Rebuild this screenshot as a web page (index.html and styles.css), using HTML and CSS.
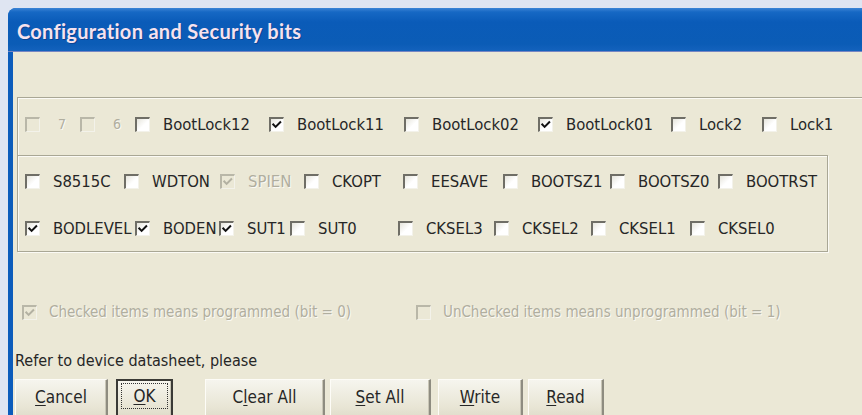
FILE: index.html
```html
<!DOCTYPE html>
<html lang="en">
<head>
<meta charset="utf-8">
<title>Configuration and Security bits</title>
<link rel="stylesheet" href="styles.css">
</head>
<body>
<div class="window">
  <div class="titlebar"><span class="title">Configuration and Security bits</span></div>
  <div class="client">
    <div class="group g1">
      <div class="row r1">
        <label class="cb dis digit"><span class="box"></span><span class="lbl">7</span></label>
        <label class="cb dis digit"><span class="box"></span><span class="lbl">6</span></label>
        <label class="cb"><span class="box"></span><span class="lbl">BootLock12</span></label>
        <label class="cb"><span class="box"><svg viewBox="0 0 13 13"><polyline points="2.5,6 5,8.5 10,3.5"/></svg></span><span class="lbl">BootLock11</span></label>
        <label class="cb"><span class="box"></span><span class="lbl">BootLock02</span></label>
        <label class="cb"><span class="box"><svg viewBox="0 0 13 13"><polyline points="2.5,6 5,8.5 10,3.5"/></svg></span><span class="lbl">BootLock01</span></label>
        <label class="cb"><span class="box"></span><span class="lbl">Lock2</span></label>
        <label class="cb"><span class="box"></span><span class="lbl">Lock1</span></label>
      </div>
    </div>
    <div class="group g2">
      <div class="row r2">
        <label class="cb"><span class="box"></span><span class="lbl">S8515C</span></label>
        <label class="cb"><span class="box"></span><span class="lbl">WDTON</span></label>
        <label class="cb dis"><span class="box"><svg viewBox="0 0 13 13"><polyline points="2.5,6 5,8.5 10,3.5"/></svg></span><span class="lbl">SPIEN</span></label>
        <label class="cb"><span class="box"></span><span class="lbl">CKOPT</span></label>
        <label class="cb"><span class="box"></span><span class="lbl">EESAVE</span></label>
        <label class="cb"><span class="box"></span><span class="lbl">BOOTSZ1</span></label>
        <label class="cb"><span class="box"></span><span class="lbl">BOOTSZ0</span></label>
        <label class="cb"><span class="box"></span><span class="lbl">BOOTRST</span></label>
      </div>
      <div class="row r3">
        <label class="cb"><span class="box"><svg viewBox="0 0 13 13"><polyline points="2.5,6 5,8.5 10,3.5"/></svg></span><span class="lbl">BODLEVEL</span></label>
        <label class="cb"><span class="box"><svg viewBox="0 0 13 13"><polyline points="2.5,6 5,8.5 10,3.5"/></svg></span><span class="lbl">BODEN</span></label>
        <label class="cb"><span class="box"><svg viewBox="0 0 13 13"><polyline points="2.5,6 5,8.5 10,3.5"/></svg></span><span class="lbl">SUT1</span></label>
        <label class="cb"><span class="box"></span><span class="lbl">SUT0</span></label>
        <label class="cb"><span class="box"></span><span class="lbl">CKSEL3</span></label>
        <label class="cb"><span class="box"></span><span class="lbl">CKSEL2</span></label>
        <label class="cb"><span class="box"></span><span class="lbl">CKSEL1</span></label>
        <label class="cb"><span class="box"></span><span class="lbl">CKSEL0</span></label>
      </div>
    </div>
    <div class="row legend">
      <label class="cb dis"><span class="box"><svg viewBox="0 0 13 13"><polyline points="2.5,6 5,8.5 10,3.5"/></svg></span><span class="lbl">Checked items means programmed (bit = 0)</span></label>
      <label class="cb dis"><span class="box"></span><span class="lbl">UnChecked items means unprogrammed (bit = 1)</span></label>
    </div>
    <div class="note">Refer to device datasheet, please</div>
    <div class="buttons">
      <button class="btn b-cancel"><u>C</u>ancel</button>
      <button class="btn b-ok default"><span class="focus"><u>O</u>K</span></button>
      <button class="btn b-clear">C<u>l</u>ear All</button>
      <button class="btn b-set"><u>S</u>et All</button>
      <button class="btn b-write"><u>W</u>rite</button>
      <button class="btn b-read"><u>R</u>ead</button>
    </div>
  </div>
</div>
</body>
</html>
```
FILE: styles.css
```css
html, body {
  margin: 0;
  padding: 0;
  overflow: hidden;
}

body {
  background: #dfe5f2;
  width: 862px;
  height: 415px;
  font-family: "DejaVu Sans Condensed", "Liberation Sans", sans-serif;
  font-size: 16.5px;
  color: #262626;
}

/* dialog frame */
.window {
  margin: 8px 0 0 8px;
  width: 860px;
  height: 420px;
  background: #0c5cbb;
  border-radius: 8px 8px 0 0;
  padding: 0 6px 0 5px;
  box-sizing: border-box;
  display: flex;
  flex-direction: column;
}

.titlebar {
  height: 44px;
  flex: none;
  margin: 0 -6px 0 -5px;
  padding-left: 9px;
  border-radius: 8px 8px 0 0;
  background: linear-gradient(#3c84d6 0px, #1668c4 4px, #0a5bb8 14px, #0b5cb6 36px, #1462bd 43px, #d7a9c8 44px);
  display: flex;
  align-items: center;
}

.title {
  font-family: Lato, "Liberation Sans", sans-serif;
  font-weight: bold;
  font-size: 20px;
  letter-spacing: 0.3px;
  color: #f6e2ee;
  text-shadow: 1px 1px 0 rgba(10, 40, 110, 0.5);
  margin-top: 1px;
}

.client {
  flex: 1;
  background: #ebe8d6;
  padding-top: 45px;
}

/* etched group frames */
.group {
  box-sizing: border-box;
  margin-left: 4px;
}

.g1 {
  height: 58px;
  border-top: 1px solid #a9a795;
  border-left: 1px solid #a9a795;
  box-shadow: inset 1px 1px 0 #fbfaf5;
  padding: 14px 0 0 7px;
}

.g2 {
  width: 811px;
  height: 97px;
  border: 1px solid #a9a795;
  box-shadow: inset 1px 1px 0 #fbfaf5, 1px 1px 0 #fbfaf5;
  padding: 13px 0 0 7px;
}

.row {
  display: grid;
  height: 24px;
  align-items: center;
}

.r1 { grid-template-columns: 55px 55px 134px 135px 134px 133px 91px auto; }
.r2 { grid-template-columns: 99px 96px 84px 99px 100px 107px 108px auto; }
.r3 { grid-template-columns: 110px 84px 71px 108px 96px 97px 99px auto; margin-top: 23px; }

.legend {
  grid-template-columns: 394px auto;
  margin: 48px 0 0 9px;
  font-size: 15px;
}

/* check boxes */
.cb {
  display: flex;
  align-items: center;
  white-space: nowrap;
}

.box {
  flex: none;
  width: 15px;
  height: 15px;
  box-sizing: border-box;
  border-style: solid;
  border-width: 2px 1px 1px 2px;
  border-color: #6f6e66 #f3f2ea #f3f2ea #6f6e66;
  background: linear-gradient(135deg, #e6e5dc, #ffffff 55%);
  margin-right: 13px;
  display: flex;
}

.legend .box {
  margin-right: 12px;
}

.box svg {
  width: 100%;
  height: 100%;
  fill: none;
  stroke: #111;
  stroke-width: 2.2;
  stroke-linecap: square;
}

.dis .box {
  border-color: #b9b7a8 #f3f2ea #f3f2ea #b9b7a8;
  background: #ebe8d6;
}

.dis .box svg {
  stroke: #b3b1a2;
}

.dis .lbl {
  color: #b0ae9f;
  text-shadow: 1px 1px 0 #fbfaf4;
}

.digit .lbl {
  font-size: 14px;
  margin-left: 5px;
}

.note {
  margin: 27px 0 0 2px;
  height: 20px;
  line-height: 20px;
  font-size: 16px;
}

/* push buttons */
.buttons {
  display: flex;
  margin: 8px 0 0 2px;
}

.btn {
  font: inherit;
  font-size: 17px;
  color: #262626;
  height: 38px;
  padding: 0 0 4px;
  box-sizing: border-box;
  border: none;
  border-left: 1px solid #fdfcf7;
  border-top: 1px solid #fdfcf7;
  border-right: 2px solid #8e8c80;
  background: linear-gradient(#f6f5ee, #e9e6d6 70%, #e0ddcb);
  box-shadow: inset -1px 0 0 #c9c6b6;
}

.btn u {
  text-underline-offset: 2px;
}

.b-cancel { width: 93px; }
.b-ok { width: 57px; margin-left: 8px; }
.b-clear { width: 120px; margin-left: 32px; }
.b-set { width: 101px; margin-left: 5px; }
.b-write { width: 85px; margin-left: 7px; }
.b-read { width: 76px; margin-left: 5px; }

.default {
  border: 2px solid #3a3a36;
  padding: 2px 3px 6px;
  display: flex;
}

.focus {
  flex: 1;
  border: 1px dotted #333;
  display: flex;
  align-items: center;
  justify-content: center;
}
```
